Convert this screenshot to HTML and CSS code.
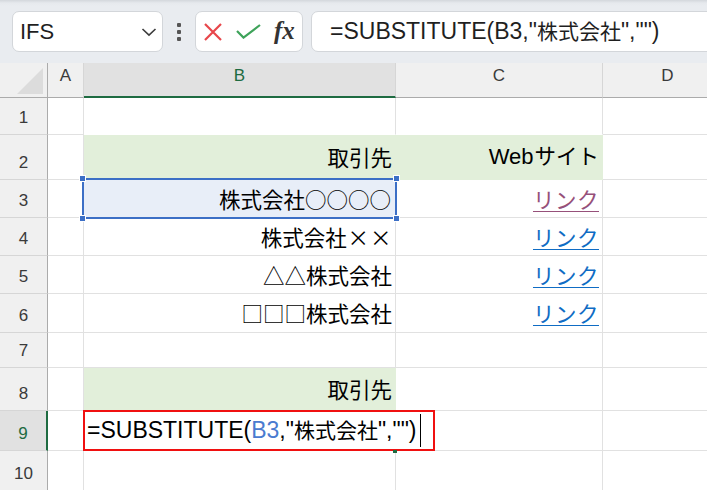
FILE: index.html
```
<!DOCTYPE html>
<html lang="ja">
<head>
<meta charset="utf-8">
<title>Excel SUBSTITUTE</title>
<link rel="stylesheet" href="styles.css">
</head>
<body>
<div class="toolbar">
  <div class="namebox">
    <span class="nb-text">IFS</span>
    <svg class="chev" width="16" height="10" viewBox="0 0 16 10"><polyline points="1.5,2 8,8.2 14.5,2" fill="none" stroke="#3c3c3c" stroke-width="1.6"/></svg>
  </div>
  <div class="kebab"><span></span><span></span><span></span></div>
  <div class="fxbox">
    <svg class="ic-x" width="18" height="18" viewBox="0 0 18 18"><path d="M1 1L17 17M17 1L1 17" stroke="#e8464b" stroke-width="2.2" fill="none"/></svg>
    <svg class="ic-check" width="25" height="15" viewBox="0 0 25 15"><path d="M1 7L7.5 13.6L24 1" stroke="#3ea35a" stroke-width="2.2" fill="none"/></svg>
    <span class="fx">fx</span>
  </div>
  <div class="formula"><span class="txt">=SUBSTITUTE(B3,"<span class="k">株式会社</span>","")</span></div>
</div>

<div class="sheet">
  <div class="corner"><svg width="27" height="27" viewBox="0 0 27 27"><polygon points="0,26 26,0 26,26" fill="#dcdcdc"/></svg></div>
  <div class="ch">A</div>
  <div class="ch sel">B</div>
  <div class="ch">C</div>
  <div class="ch">D</div>

  <div class="rh">1</div>
  <div class="c"></div>
  <div class="c nb"></div>
  <div class="c nb"></div>
  <div class="c"></div>

  <div class="rh">2</div>
  <div class="c"></div>
  <div class="c green jp">取引先</div>
  <div class="c green"><span class="txt"><span class="lat">Web</span>サイト</span></div>
  <div class="c"></div>

  <div class="rh">3</div>
  <div class="c"></div>
  <div class="c jp b3">株式会社○○○○<span class="h tl"></span><span class="h tr"></span><span class="h bl"></span><span class="h br"></span></div>
  <div class="c jp"><span class="link visited">リンク</span></div>
  <div class="c"></div>

  <div class="rh">4</div>
  <div class="c"></div>
  <div class="c jp">株式会社<span class="fw">×</span><span class="fw">×</span></div>
  <div class="c jp"><span class="link">リンク</span></div>
  <div class="c"></div>

  <div class="rh">5</div>
  <div class="c"></div>
  <div class="c jp">△△株式会社</div>
  <div class="c jp"><span class="link">リンク</span></div>
  <div class="c"></div>

  <div class="rh">6</div>
  <div class="c"></div>
  <div class="c jp">□□□株式会社</div>
  <div class="c jp"><span class="link">リンク</span></div>
  <div class="c"></div>

  <div class="rh">7</div>
  <div class="c"></div>
  <div class="c"></div>
  <div class="c"></div>
  <div class="c"></div>

  <div class="rh">8</div>
  <div class="c"></div>
  <div class="c green jp">取引先</div>
  <div class="c"></div>
  <div class="c"></div>

  <div class="rh sel">9</div>
  <div class="c"></div>
  <div class="c b9">
    <div class="editor"><span class="txt">=SUBSTITUTE(<span class="ref">B3</span>,"<span class="k">株式会社</span>","")</span><span class="caret"></span><span class="fillh"></span></div>
  </div>
  <div class="c"></div>
  <div class="c"></div>

  <div class="rh">10</div>
  <div class="c"></div>
  <div class="c"></div>
  <div class="c"></div>
  <div class="c"></div>
</div>
</body>
</html>
```
FILE: styles.css
```
* { box-sizing: border-box; }

body {
  margin: 0;
  width: 707px;
  height: 490px;
  overflow: hidden;
  background: #ffffff;
  font-family: "Liberation Sans", "Noto Sans CJK JP", sans-serif;
}

/* ---------- formula bar ---------- */
.toolbar {
  height: 63px;
  display: flex;
  align-items: center;
  padding-left: 12px;
  background: linear-gradient(#d3d7dc 0, #e6e9ed 3px, #e9ecf0 6px, #e9ecf0 100%);
}

.namebox {
  flex: none;
  width: 151px;
  height: 41px;
  background: #fff;
  border: 1px solid #d3d6da;
  border-radius: 7px;
  display: flex;
  align-items: center;
  justify-content: space-between;
  padding: 0 5px 0 7px;
  font-size: 22px;
  color: #1f1f1f;
}

.chev { display: block; }

.kebab {
  flex: none;
  width: 6px;
  margin: 0 13px;
  display: flex;
  flex-direction: column;
  align-items: center;
  gap: 3px;
}
.kebab span {
  width: 4px;
  height: 4px;
  border-radius: 1px;
  background: #555;
}

.fxbox {
  flex: none;
  width: 108px;
  height: 41px;
  background: #fff;
  border: 1px solid #d3d6da;
  border-radius: 7px;
  display: flex;
  align-items: center;
  padding-left: 8px;
}
.ic-x { display: block; margin-right: 14px; }
.ic-check { display: block; margin-right: 13px; }
.fx {
  font-family: "Liberation Serif", serif;
  font-style: italic;
  font-weight: bold;
  font-size: 25px;
  color: #333;
  line-height: 1;
  margin-top: -2px;
}

.formula {
  flex: none;
  width: 430px;
  height: 41px;
  margin-left: 8px;
  background: #fff;
  border: 1px solid #d3d6da;
  border-radius: 7px;
  display: flex;
  align-items: center;
  padding-left: 18px;
  font-size: 23px;
  color: #1f1f1f;
  white-space: nowrap;
}

.txt { line-height: 1.2; }
.k { font-size: 21px; }

/* ---------- grid ---------- */
.sheet {
  display: grid;
  grid-template-columns: 48px 36px 312px 207px 130px;
  grid-template-rows: 35px 37px 45px 38px 38px 38px 39px 35px 43px 40px 40px;
}

.corner {
  background: #f0f0f0;
  border-right: 1px solid #ababab;
  border-bottom: 1px solid #ababab;
  display: flex;
  justify-content: flex-end;
  align-items: flex-end;
  padding: 0 3px 2px 0;
}
.corner svg { display: block; }

.ch {
  background: #f0f0f0;
  border-right: 1px solid #d6d6d6;
  border-bottom: 1px solid #ababab;
  display: flex;
  align-items: center;
  justify-content: center;
  padding-bottom: 8px;
  font-size: 17px;
  color: #3a3a3a;
}
.ch.sel {
  background: #e1e1e1;
  color: #1e6b41;
  border-bottom: 2px solid #1e6b41;
}

.rh {
  background: #f0f0f0;
  border-right: 1px solid #ababab;
  border-bottom: 1px solid #d6d6d6;
  display: flex;
  align-items: flex-end;
  justify-content: center;
  font-size: 17px;
  line-height: 20px;
  padding-bottom: 6px;
  color: #3a3a3a;
}
.rh.sel {
  background: #e1e1e1;
  color: #1e6b41;
  border-right: 2px solid #1e6b41;
}

.c {
  border-right: 1px solid #e1e1e1;
  border-bottom: 1px solid #e1e1e1;
  display: flex;
  align-items: center;
  justify-content: flex-end;
  padding: 0 3px;
  font-size: 21.5px;
  line-height: 1.2;
  color: #000;
  white-space: nowrap;
}
.c.nb { border-bottom-color: transparent; }
.jp { font-family: "Noto Sans CJK JP", sans-serif; }
.lat { font-size: 22px; margin-right: 1px; }
.green {
  background: #e2efda;
  border-color: transparent;
}
.fw {
  display: inline-block;
  width: 1.05em;
  text-align: center;
}

.link {
  color: #0f6cc4;
  text-decoration: underline;
  text-decoration-thickness: 1px;
  text-underline-offset: 3px;
  letter-spacing: 0.5px;
}
.link.visited { color: #96507a; }

/* B3 reference highlight */
.b3 {
  position: relative;
  background: #e8eef8;
  padding-right: 4px;
}
.b3::before {
  content: "";
  position: absolute;
  inset: -2px;
  border: 2px solid #3c6fc6;
}
.h {
  position: absolute;
  width: 7px;
  height: 7px;
  background: #3c6fc6;
  border: 1px solid #fff;
}
.h.tl { left: -5px; top: -5px; }
.h.tr { right: -5px; top: -5px; }
.h.bl { left: -5px; bottom: -5px; }
.h.br { right: -5px; bottom: -5px; }

/* B9 in-cell editor */
.b9 { position: relative; }
.editor {
  position: absolute;
  left: -1px;
  top: -1px;
  width: 352px;
  height: 41px;
  z-index: 2;
  background: #fff;
  border: 2px solid #f01010;
  display: flex;
  align-items: center;
  padding-left: 2px;
  font-size: 23px;
  color: #000;
  white-space: nowrap;
}
.ref { color: #4a7bd0; }
.caret {
  display: inline-block;
  width: 1px;
  height: 33px;
  margin-left: 4px;
  background: #000;
}
.fillh {
  position: absolute;
  left: 308px;
  top: calc(100% + 1px);
  width: 4px;
  height: 3px;
  background: #1e6b41;
}
```
